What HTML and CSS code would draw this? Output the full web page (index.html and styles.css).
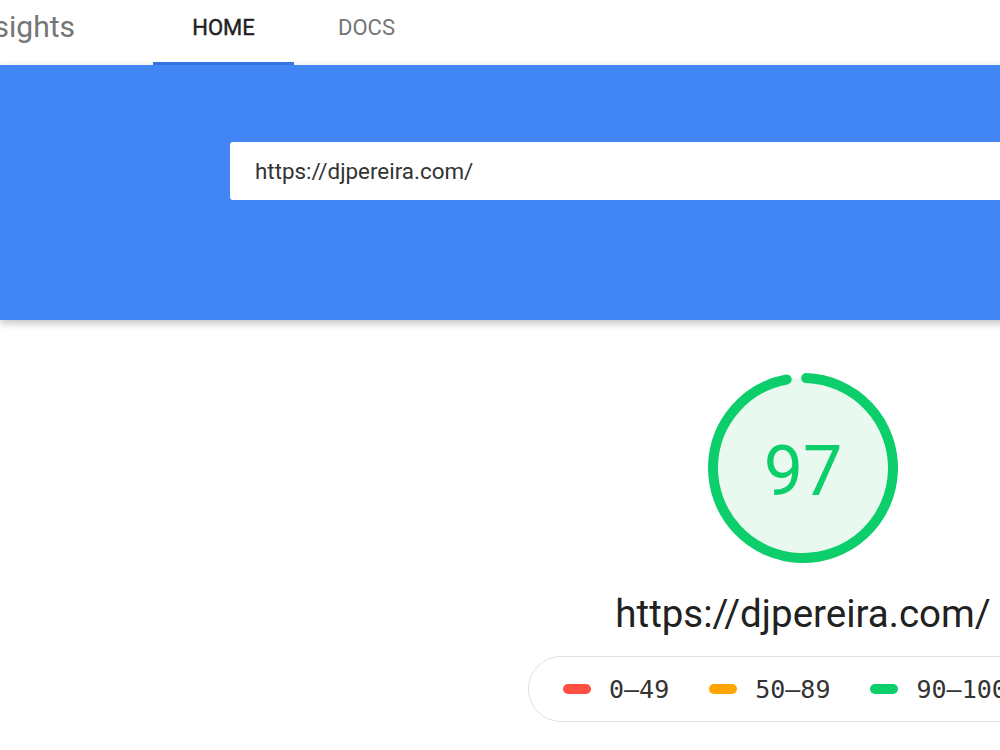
FILE: index.html
```html
<!DOCTYPE html>
<html lang="en">
<head>
  <meta charset="UTF-8" />
  <meta name="viewport" content="width=device-width, initial-scale=1.0" />
  <title>PageSpeed Insights</title>
  <link rel="stylesheet" href="styles.css">
</head>
<body>
  <div class="page">
    <div class="header">
      <div class="brand">
        <span class="brand-name">PageSpeed Insights</span>
      </div>
      <div class="tabs">
        <div class="tab active">HOME</div>
        <div class="tab">DOCS</div>
      </div>
    </div>
    <div class="hero">
      <div class="search">
        <span class="search-text">https://djpereira.com/</span>
      </div>
    </div>
    <div class="results">
      <div class="gauge">
        <svg width="200" height="200" viewBox="0 0 200 200">
          <circle cx="100" cy="100" r="90" fill="#e9f9ef" />
          <circle cx="100" cy="100" r="90" fill="none" stroke="#0cce6b" stroke-width="10"
            stroke-linecap="round" stroke-dasharray="545 565.5" transform="rotate(-88 100 100)" />
        </svg>
        <div class="gauge-score">97</div>
      </div>
      <div class="result-url">https://djpereira.com/</div>
      <div class="legend">
        <div class="legend-item"><span class="bar bar-fail"></span>0–49</div>
        <div class="legend-item"><span class="bar bar-avg"></span>50–89</div>
        <div class="legend-item"><span class="bar bar-pass"></span>90–100</div>
      </div>
    </div>
  </div>
</body>
</html>
```

FILE: styles.css
```css
html, body {
  margin: 0;
  padding: 0;
  overflow: hidden;
  background-color: #fff;
  font-family: Roboto, 'Noto Sans', Arial, sans-serif;
}
.page {
  width: 1606px;
}
.header {
  display: flex;
  align-items: stretch;
  height: 65px;
  background-color: #fff;
}
.brand {
  width: 75px;
  overflow: hidden;
  display: flex;
  justify-content: flex-end;
  align-items: center;
  padding-bottom: 12px;
}
.brand-name {
  white-space: nowrap;
  font-size: 30px;
  color: #757575;
}
.tabs {
  display: flex;
  gap: 2px;
  margin-left: 78px;
}
.tab {
  width: 141px;
  box-sizing: border-box;
  display: flex;
  justify-content: center;
  padding-top: 15px;
  font-size: 22px;
  color: #757575;
  border-bottom: 3px solid transparent;
}
.tab.active {
  color: #212121;
  border-bottom-color: #3b78e7;
  -webkit-text-stroke: 0.4px #212121;
}
.hero {
  height: 255px;
  box-sizing: border-box;
  padding-top: 77px;
  background-color: #4285f4;
  box-shadow: 0 3px 8px rgba(0, 0, 0, 0.25);
  position: relative;
  z-index: 1;
}
.search {
  width: 1146px;
  height: 58px;
  margin: 0 auto;
  box-sizing: border-box;
  padding-left: 25px;
  display: flex;
  align-items: center;
  background-color: #fff;
  border-radius: 3px;
}
.search-text {
  font-size: 22.4px;
  color: #333;
}
.results {
  display: flex;
  flex-direction: column;
  align-items: center;
  padding-top: 48px;
}
.gauge {
  width: 200px;
  height: 200px;
  display: grid;
  place-items: center;
}
.gauge svg {
  grid-area: 1 / 1;
}
.gauge-score {
  grid-area: 1 / 1;
  padding-top: 6px;
  font-size: 70px;
  color: #0cce6b;
  line-height: 1;
}
.result-url {
  margin-top: 24px;
  font-size: 38.5px;
  color: #212121;
  line-height: 44px;
}
.legend {
  margin-top: 20px;
  height: 66px;
  width: 550px;
  box-sizing: border-box;
  padding: 0 34px;
  display: flex;
  align-items: center;
  gap: 40px;
  border: 1px solid #e0e0e0;
  border-radius: 33px;
}
.legend-item {
  display: flex;
  align-items: center;
  gap: 18px;
  font-family: 'DejaVu Sans Mono', 'Liberation Mono', monospace;
  font-size: 25px;
  color: #333;
}
.bar {
  width: 28px;
  height: 10px;
  border-radius: 5px;
}
.bar-fail {
  background-color: #ff4e42;
}
.bar-avg {
  background-color: #ffa400;
}
.bar-pass {
  background-color: #0cce6b;
}
```
